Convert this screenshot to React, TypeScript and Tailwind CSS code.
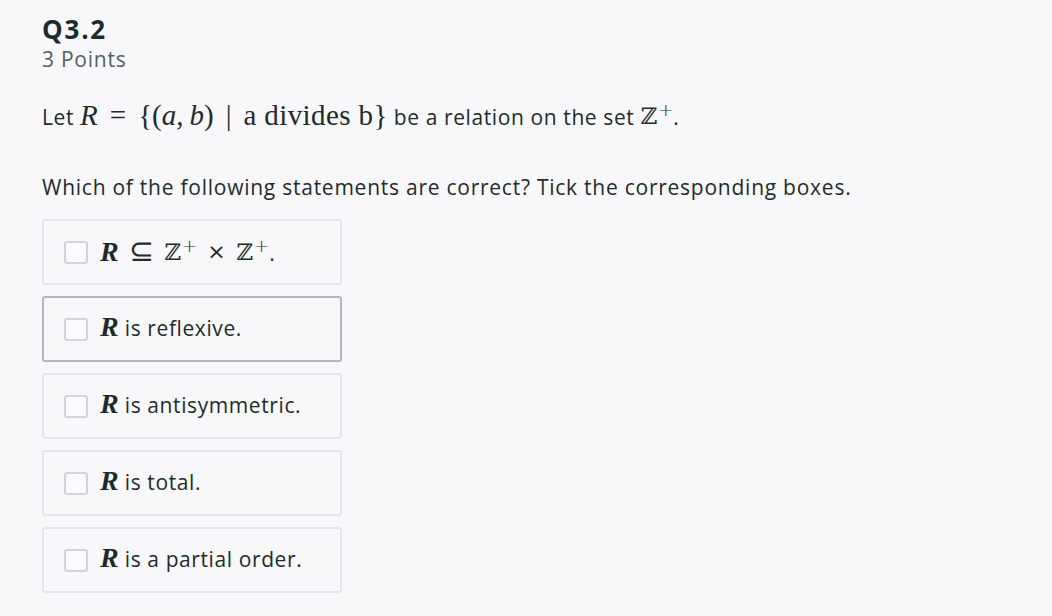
import React from 'react'

const sans = "font-['Open_Sans','Lato',sans-serif]"
const math = "font-['Liberation_Serif','DejaVu_Serif',serif]"

function R() {
  return <span className={`${math} italic text-[28px] font-bold leading-none tracking-normal`}>R</span>
}

function Zp() {
  return (
    <span className="inline-flex items-start leading-none tracking-normal">
      <span className="font-['DejaVu_Serif',serif] text-[23px] leading-none">ℤ</span>
      <span className="font-['DejaVu_Sans',sans-serif] font-light text-[18px] leading-none -mt-[4px] ml-[1px]">+</span>
    </span>
  )
}

const options: React.ReactNode[] = [
  <span className="flex items-center gap-[10px]">
    <R />
    <span className="font-['DejaVu_Sans',sans-serif] font-light text-[30px] leading-none -mt-[2px]">⊆</span>
    <Zp />
    <span className="font-['DejaVu_Sans',sans-serif] text-[22px] leading-none">×</span>
    <span className="flex items-end"><Zp /><span className="text-[21px] leading-none">.</span></span>
  </span>,
  <span><R /> <span>is reflexive.</span></span>,
  <span><R /> <span>is antisymmetric.</span></span>,
  <span><R /> <span>is total.</span></span>,
  <span><R /> <span>is a partial order.</span></span>,
]

export default function App() {
  return (
    <div className={`min-h-screen bg-[#f8f8fa] text-[#1e2b2b] ${sans} tracking-[0.75px] px-[42px] pt-[13px]`}>
      <h2 className="text-[26px] font-bold leading-[32px] tracking-[1.8px]">Q3.2</h2>
      <p className="text-[21px] leading-[28px] text-[#545f63]">3 Points</p>

      <p className="mt-[24px] text-[21px] leading-[36px] flex items-baseline gap-[6px] tracking-[0.6px]">
        <span>Let</span>
        <span className={`${math} text-[29px] tracking-normal flex items-baseline gap-[12px]`}>
          <span className="italic">R</span>
          <span>=</span>
          <span>{'{('}<span className="italic">a</span>,<span className="ml-[6px] italic">b</span>{')'}</span>
          <span>|</span>
          <span className="tracking-[0.4px]">a divides b{'}'}</span>
        </span>
        <span>be a relation on the set</span>
        <span className="flex items-end self-center"><Zp /><span className="leading-none">.</span></span>
      </p>

      <p className="mt-[38px] text-[21px] leading-[28px]">
        Which of the following statements are correct? Tick the corresponding boxes.
      </p>

      <div className="mt-[18px] flex flex-col gap-[11px] tracking-[0.6px]">
        {options.map((opt, i) => (
          <label
            key={i}
            className={`w-[300px] h-[66px] rounded-[3px] border-2 flex items-center pl-[20px] gap-[12px] text-[21px] ${
              i === 1 ? 'border-[#b3b7bb]' : 'border-[#e4e6ea]'
            }`}
          >
            <span className="w-[24px] h-[23px] shrink-0 rounded-[3px] border-2 border-[#d0d5db] bg-[#fafbfc]" />
            {opt}
          </label>
        ))}
      </div>
    </div>
  )
}
